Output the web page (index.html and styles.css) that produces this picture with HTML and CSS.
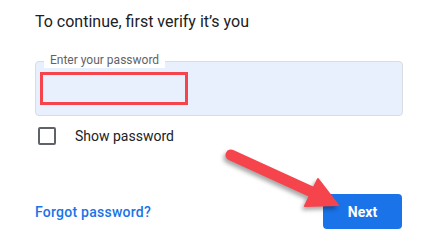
FILE: index.html
```html
<!DOCTYPE html>
<html>
<head>
    <link rel="stylesheet" href="styles.css">
</head>
<body>
    <div class="container">
        <div class="title">To continue, first verify it’s you</div>

        <!-- Password field -->
        <div class="field">
            <span class="field-label">Enter your password</span>
            <div class="highlight"></div>
        </div>

        <label class="show-row">
            <span class="checkbox"></span>
            <span>Show password</span>
        </label>

        <div class="actions">
            <a class="forgot" href="#">Forgot password?</a>
            <button class="next">Next</button>
        </div>

        <!-- Annotation arrow -->
        <svg class="arrow" width="441" height="240" viewBox="0 0 441 240">
            <line x1="231" y1="155" x2="312" y2="192" stroke="#f6444c" stroke-width="11" stroke-linecap="round"/>
            <polygon points="318,179 305,206 338,205" fill="#f6444c" stroke="#f6444c" stroke-width="2" stroke-linejoin="round"/>
        </svg>
    </div>
</body>
</html>
```

FILE: styles.css
```css
body {
    margin: 0;
    font-family: Roboto, "Liberation Sans", sans-serif;
    background: #fff;
}

.container {
    position: relative;
    width: 368px;
    height: 240px;
    padding: 11px 0 0 35px;
    box-sizing: content-box;
}

.title {
    font-size: 16px;
    line-height: 22px;
    color: #202124;
}

.field {
    position: relative;
    margin-top: 28px;
    height: 53px;
    background: #e8f0fe;
    border: 1px solid #dadce0;
    border-radius: 4px;
}

.field-label {
    position: absolute;
    left: 8px;
    top: -9px;
    padding: 0 6px;
    background: #fff;
    font-size: 12px;
    line-height: 15px;
    color: #5f6368;
}

.highlight {
    position: absolute;
    left: 4px;
    top: 10px;
    width: 142px;
    height: 27px;
    border: 3px solid #f6444c;
}

.show-row {
    display: flex;
    align-items: center;
    margin-top: 11px;
    font-size: 14px;
    color: #202124;
}

.checkbox {
    width: 14px;
    height: 14px;
    margin-left: 3px;
    margin-right: 19px;
    border: 2px solid #5f6368;
    border-radius: 2px;
}

.actions {
    display: flex;
    justify-content: space-between;
    align-items: center;
    margin-top: 49px;
}

.forgot {
    font-size: 14px;
    font-weight: 500;
    letter-spacing: 0.25px;
    color: #1a73e8;
    text-decoration: none;
}

.next {
    width: 79px;
    height: 35px;
    margin-right: 1px;
    border: none;
    border-radius: 4px;
    background: #1a73e8;
    color: #fff;
    font-family: Roboto, "Liberation Sans", sans-serif;
    font-size: 14px;
    font-weight: 700;
}

.arrow {
    position: absolute;
    left: 0;
    top: 0;
    filter: drop-shadow(-2px 3px 2px rgba(0, 0, 0, 0.35));
}
```
